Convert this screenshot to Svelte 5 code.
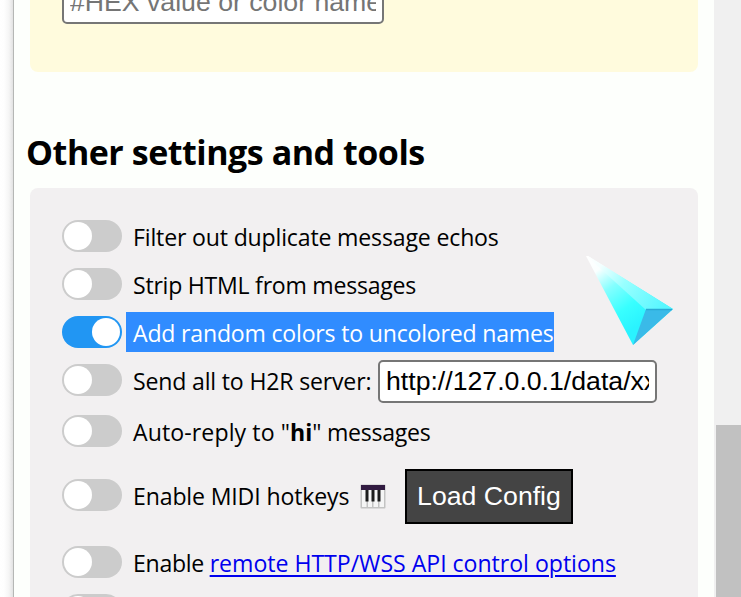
<script>
  const rows = [
    { height: 48, text: 'Filter out duplicate message echos', spacing: -0.17 },
    { height: 48, text: 'Strip HTML from messages', spacing: -0.25 },
    { height: 48, text: 'Add random colors to uncolored names', spacing: -0.2, on: true },
    { height: 48, text: 'Send all to H2R server:', spacing: -0.18, kind: 'server' },
    { height: 54, kind: 'reply', spacing: -0.04 },
    { height: 74, text: 'Enable MIDI hotkeys', spacing: -0.15, kind: 'midi' },
    { height: 60, kind: 'remote', spacing: -0.3 },
    { height: 36, text: '', spacing: 0 }
  ];
</script>

<div class="window">
  <div class="edge"></div>
  <main>
    <section class="card yellow">
      <input class="color" type="text" placeholder="#HEX value or color name" />
    </section>
    <h2>Other settings and tools</h2>
    <section class="card settings">
      {#each rows as row}
        <div class="row" style:height="{row.height}px">
          <span class="switch" class:on={row.on}><span class="knob"></span></span>
          <span class="label" class:selected={row.on} style:letter-spacing="{row.spacing}px">
            {#if row.kind === 'reply'}<span class="lead">Auto-reply to "</span><b>hi</b><span class="tail">" messages</span>
            {:else if row.kind === 'remote'}Enable <a href="#remote">remote HTTP/WSS API control options</a>
            {:else}{row.text}{/if}
          </span>
          {#if row.kind === 'server'}
            <input class="server" type="text" value="http://127.0.0.1/data/xxxx" />
          {:else if row.kind === 'midi'}
            <svg class="piano" width="26" height="25" viewBox="0 0 26 25">
              <rect x=".5" y=".5" width="25" height="24" rx="1" fill="#c3c3c3" />
              <path d="M2 5h4.500v18H2zM8 5h4v18H8zM13.500 5h4.500v18H13.500zM19.500 5H24v18h-4.500z" fill="#f5f5f5" />
              <path d="M5.500 5h3v12.500h-3zM11.500 5h3v12.500h-3zM17.500 5h3v12.500h-3z" fill="#1c1c1c" />
              <path d="M1 1h24v5H1z" fill="#321b41" />
            </svg>
            <button>Load Config</button>
          {/if}
        </div>
      {/each}
    </section>
  </main>
  <div class="scrollbar"><div class="thumb"></div></div>
  <svg class="pointer" width="90" height="92" viewBox="0 0 90 92">
    <defs>
      <linearGradient id="front" gradientUnits="userSpaceOnUse" x1="4" y1="3" x2="54" y2="72">
        <stop offset="0" stop-color="#fff" />
        <stop offset=".2" stop-color="#faffff" />
        <stop offset=".45" stop-color="#85ffff" />
        <stop offset=".75" stop-color="#38ffff" />
        <stop offset="1" stop-color="#2af3ff" />
      </linearGradient>
      <linearGradient id="top" gradientUnits="userSpaceOnUse" x1="4" y1="3" x2="78" y2="56">
        <stop offset="0" stop-color="#fff" />
        <stop offset=".18" stop-color="#f4ffff" />
        <stop offset=".5" stop-color="#98ffff" />
        <stop offset="1" stop-color="#58f7ff" />
      </linearGradient>
    </defs>
    <path d="M3 2 5 2 90 55 50 91Z" fill="url(#front)" />
    <path d="M3.500 2 5 2 90 55 63 56Z" fill="url(#top)" />
    <path d="M63 55 90 55 50 91Z" fill="#3abae8" />
    <path d="M63 55.500H89" stroke="#29a9d5" stroke-width="1.500" />
  </svg>
</div>

<style>
  .window {
    position: relative;
    display: flex;
    width: 741px;
    height: 597px;
    overflow: hidden;
    background: #fdfffc;
    color: #000;
    font-family: "Open Sans", "Noto Sans", sans-serif;
  }
  .edge {
    flex: none;
    box-sizing: border-box;
    width: 14px;
    border-right: 1px solid #b5b7b5;
    background: linear-gradient(to right, #fff 0, #fefefe 4px, #f5f5f5 9px, #e2e2e2 13px);
  }
  main {
    flex: none;
    box-sizing: border-box;
    width: 700px;
    padding: 0 16px;
  }
  .card {
    box-sizing: border-box;
    width: 668px;
    border-radius: 8px;
  }
  .yellow {
    display: flex;
    align-items: flex-start;
    height: 72px;
    padding-left: 32px;
    border-radius: 0 0 8px 8px;
    background: #fffbdd;
  }
  input {
    box-sizing: border-box;
    margin: 0;
    padding: 2px 6px;
    border: 2px solid #767676;
    border-radius: 5px;
    background: #fff;
    color: #000;
    font: 26.67px "Liberation Sans", Arial, sans-serif;
  }
  input::placeholder { color: #757575; }
  .color {
    width: 322px;
    height: 43px;
    margin-top: -19px;
  }
  h2 {
    height: 48px;
    margin: 56px 0 12px -4px;
    font-size: 34px;
    font-weight: 700;
    letter-spacing: -0.47px;
    line-height: 48px;
    white-space: nowrap;
  }
  .settings {
    height: 460px;
    padding: 24px 0 0 32px;
    background: #f2f0f1;
  }
  .row {
    display: flex;
    align-items: center;
  }
  .switch {
    flex: none;
    display: flex;
    box-sizing: border-box;
    width: 60px;
    height: 32px;
    padding: 2px;
    border-radius: 16px;
    background: #ccc;
  }
  .switch.on {
    justify-content: flex-end;
    background: #2196f3;
  }
  .knob {
    width: 28px;
    height: 28px;
    border-radius: 50%;
    background: #fff;
  }
  .label {
    height: 40px;
    margin-left: 4px;
    padding-left: 7px;
    font-size: 23.1px;
    line-height: 43px;
    white-space: nowrap;
  }
  .lead { letter-spacing: 0.1px; }
  .tail { letter-spacing: -0.26px; }
  .selected {
    background: #308cff;
    color: #fff;
  }
  a {
    color: #0000ee;
    letter-spacing: -0.02px;
    text-decoration-thickness: 2px;
    text-underline-offset: 3px;
  }
  .server {
    width: 279px;
    height: 43px;
    margin: 3px 41px 0 auto;
  }
  .piano {
    flex: none;
    margin: 2px 0 0 auto;
  }
  button {
    box-sizing: border-box;
    width: 168px;
    height: 55px;
    margin: 3px 125px 0 19px;
    padding: 0 0 1px;
    border: 2px solid #000;
    border-radius: 0;
    background: #444;
    color: #fff;
    font: 26.67px "Liberation Sans", Arial, sans-serif;
    white-space: nowrap;
  }
  .scrollbar {
    width: 27px;
    box-sizing: border-box;
    padding: 425px 0 0 2px;
    background: #f0f0f0;
  }
  .thumb {
    height: 172px;
    background: #c1c1c1;
  }
  .pointer {
    position: absolute;
    left: 583px;
    top: 254px;
  }
</style>
